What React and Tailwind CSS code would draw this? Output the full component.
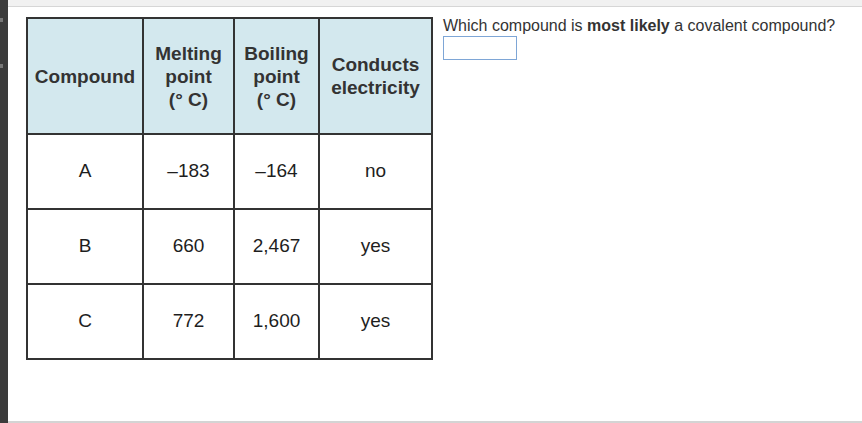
export default function App() {
  const rows = [
    ["A", "\u2013183", "\u2013164", "no"],
    ["B", "660", "2,467", "yes"],
    ["C", "772", "1,600", "yes"],
  ];
  const th = "border-2 border-[#333] bg-[#d3e8ee] font-bold text-[#333] text-center align-middle leading-[23px] p-0";
  const td = "border-2 border-[#333] text-[#1e1e1e] text-center align-middle h-[75px] p-0";
  return (
    <div className="w-[862px] h-[423px] flex bg-white" style={{ fontFamily: '"Liberation Sans", Arial, sans-serif' }}>
      <div className="w-[8px] h-full bg-[#3b3b3b] flex flex-col">
        <div className="h-[18px]" />
        <div className="w-[3px] h-[4px] bg-[#777]" />
        <div className="h-[42px]" />
        <div className="w-[3px] h-[4px] bg-[#777]" />
      </div>
      <div className="flex-1 flex flex-col">
        <div className="h-[7px] bg-[#f1f1f1] border-b border-[#d6d6d6]" />
        <div className="flex-1 flex items-start pl-[18px] pt-[10px] border-b-2 border-[#d4d4d4]">
          <table className="border-collapse table-fixed w-[405px] text-[19px]">
            <colgroup>
              <col className="w-[116px]" />
              <col className="w-[91px]" />
              <col className="w-[85px]" />
              <col className="w-[113px]" />
            </colgroup>
            <thead>
              <tr className="h-[116px]">
                <th className={th}>Compound</th>
                <th className={th}>Melting<br />point<br />(° C)</th>
                <th className={th}>Boiling<br />point<br />(° C)</th>
                <th className={th}>Conducts<br />electricity</th>
              </tr>
            </thead>
            <tbody>
              {rows.map((r) => (
                <tr key={r[0]}>
                  {r.map((c, i) => (
                    <td key={i} className={td}>{c}</td>
                  ))}
                </tr>
              ))}
            </tbody>
          </table>
          <div className="ml-[10px] mt-[0px] text-[16px] text-[#333] leading-[18px]">
            <div>
              Which compound is <b>most likely</b> a covalent compound?
            </div>
            <div className="mt-[1px] w-[74px] h-[24px] border border-[#7ea6d6] bg-white" />
          </div>
        </div>
      </div>
    </div>
  );
}
